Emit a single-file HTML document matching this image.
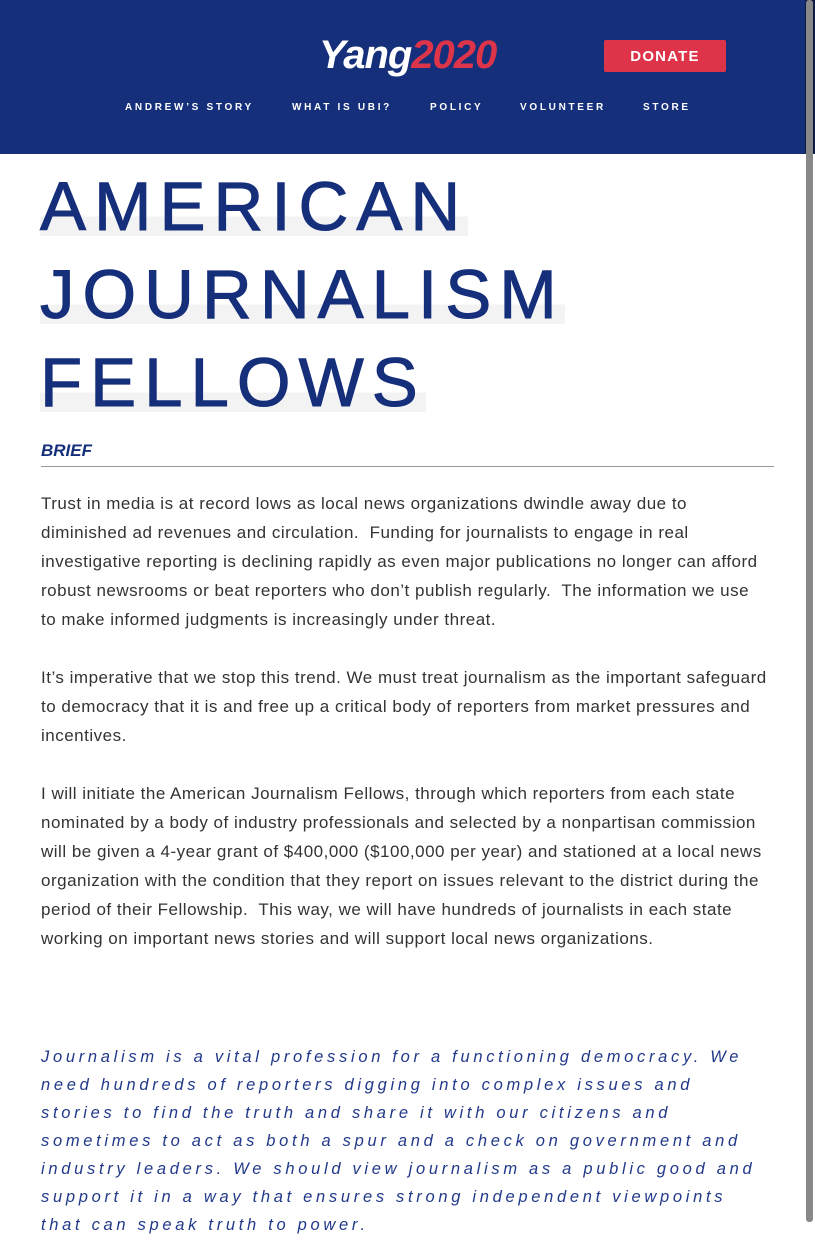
<!DOCTYPE html>
<html><head><meta charset="utf-8"><style>
*{margin:0;padding:0;box-sizing:border-box}
html,body{width:815px;height:1246px;overflow:hidden;background:#fff;font-family:"Liberation Sans",sans-serif}
header{position:absolute;left:0;top:0;width:815px;height:154px;background:#152f7b}
.logo{position:absolute;left:319px;top:33px;font-size:40px;font-weight:bold;font-style:italic;letter-spacing:-1px}
.logo .y{color:#fff}.logo .r{color:#dd344a}
.donate{position:absolute;left:604px;top:40px;width:122px;height:32px;background:#dd344a;border-radius:2px;color:#fff;font-weight:bold;font-size:15px;letter-spacing:1.2px;text-align:center;line-height:33px}
.nav a{position:absolute;top:102px;color:#fff;font-size:10px;font-weight:bold;letter-spacing:2.7px;text-decoration:none}
.sb{position:absolute;left:805px;top:0;width:10px;height:1246px;background:#fff}
.sb .t{position:absolute;left:0;top:0;width:10px;height:154px;background:#0d1b48}
.sb .th{position:absolute;left:1px;top:0;width:7px;height:1222px;background:#888;border-radius:3px}
h1{position:absolute;left:40px;top:163px;font-size:69px;font-weight:normal;letter-spacing:8px;color:#152f7b;line-height:88px;-webkit-text-stroke:1px #152f7b;white-space:nowrap}
h1 span{background:linear-gradient(to bottom,transparent 63%,#f3f3f3 63%,#f3f3f3 88%,transparent 88%)}
.brief{position:absolute;left:41px;top:441px;font-size:17px;font-weight:bold;font-style:italic;color:#152f7b}
.hr{position:absolute;left:41px;top:466px;width:733px;height:1px;background:#999}
.body{position:absolute;left:41px;top:489px;width:760px;font-size:17px;line-height:29px;color:#333;letter-spacing:0.5px;white-space:nowrap}
.body p{margin-bottom:29px}
.quote{position:absolute;left:41px;top:1043px;width:760px;font-size:16.5px;line-height:28px;font-style:italic;color:#22398a;letter-spacing:3.7px;white-space:nowrap}
</style></head><body>
<header>
<div class="logo"><span class="y">Yang</span><span class="r">2020</span></div>
<div class="donate">DONATE</div>
<div class="nav">
<a style="left:125px">ANDREW’S STORY</a>
<a style="left:292px">WHAT IS UBI?</a>
<a style="left:430px">POLICY</a>
<a style="left:520px">VOLUNTEER</a>
<a style="left:643px">STORE</a>
</div>
</header>
<h1><span>AMERICAN</span><br><span>JOURNALISM</span><br><span>FELLOWS</span></h1>
<div class="brief">BRIEF</div>
<div class="hr"></div>
<div class="body">
<p>Trust in media is at record lows as local news organizations dwindle away due to<br>diminished ad revenues and circulation.&nbsp; Funding for journalists to engage in real<br>investigative reporting is declining rapidly as even major publications no longer can afford<br>robust newsrooms or beat reporters who don’t publish regularly.&nbsp; The information we use<br>to make informed judgments is increasingly under threat.</p>
<p>It’s imperative that we stop this trend. We must treat journalism as the important safeguard<br>to democracy that it is and free up a critical body of reporters from market pressures and<br>incentives.</p>
<p>I will initiate the American Journalism Fellows, through which reporters from each state<br>nominated by a body of industry professionals and selected by a nonpartisan commission<br>will be given a 4-year grant of $400,000 ($100,000 per year) and stationed at a local news<br>organization with the condition that they report on issues relevant to the district during the<br>period of their Fellowship.&nbsp; This way, we will have hundreds of journalists in each state<br>working on important news stories and will support local news organizations.</p>
</div>
<div class="quote">Journalism is a vital profession for a functioning democracy. We<br>need hundreds of reporters digging into complex issues and<br>stories to find the truth and share it with our citizens and<br>sometimes to act as both a spur and a check on government and<br>industry leaders. We should view journalism as a public good and<br>support it in a way that ensures strong independent viewpoints<br>that can speak truth to power.</div>
<div class="sb"><div class="t"></div><div class="th"></div></div>
</body></html>
